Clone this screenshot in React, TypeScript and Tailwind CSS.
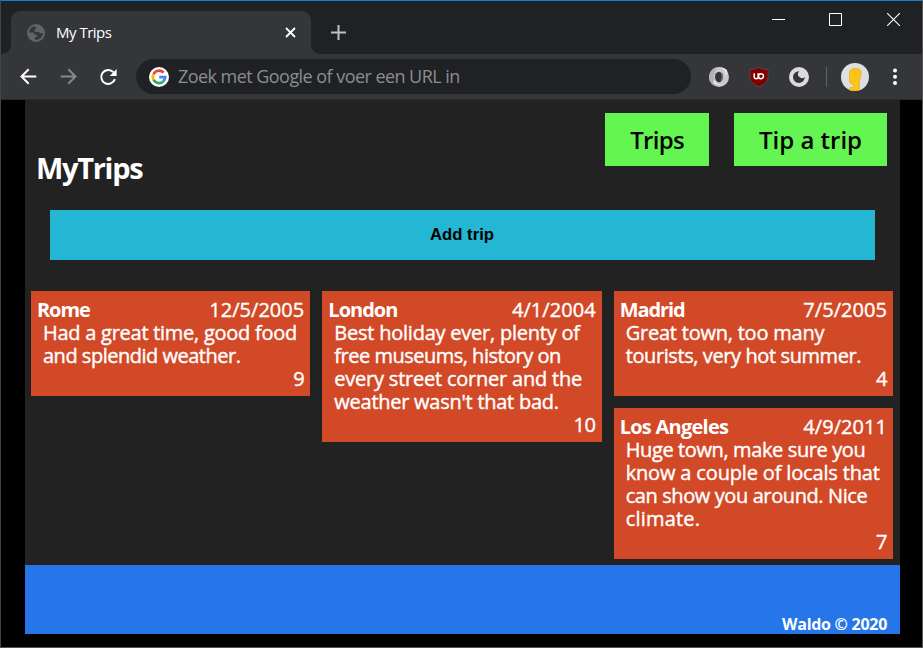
import type { ReactNode } from "react";

type Line = { text: string; track: string };
type Trip = {
  town: Line;
  date: string;
  lines: Line[];
  rating: string;
};

const rome: Trip = {
  town: { text: "Rome", track: "tracking-[-1.1px]" },
  date: "12/5/2005",
  lines: [
    { text: "Had a great time, good food", track: "tracking-[-0.26px]" },
    { text: "and splendid weather.", track: "tracking-[-0.49px]" },
  ],
  rating: "9",
};

const london: Trip = {
  town: { text: "London", track: "tracking-[-1px]" },
  date: "4/1/2004",
  lines: [
    { text: "Best holiday ever, plenty of", track: "tracking-[-0.23px]" },
    { text: "free museums, history on", track: "tracking-[-0.5px]" },
    { text: "every street corner and the", track: "tracking-[-0.22px]" },
    { text: "weather wasn't that bad.", track: "tracking-[-0.26px]" },
  ],
  rating: "10",
};

const madrid: Trip = {
  town: { text: "Madrid", track: "tracking-[-1.1px]" },
  date: "7/5/2005",
  lines: [
    { text: "Great town, too many", track: "tracking-[-0.22px]" },
    { text: "tourists, very hot summer.", track: "tracking-[-0.4px]" },
  ],
  rating: "4",
};

const losAngeles: Trip = {
  town: { text: "Los Angeles", track: "tracking-[-0.75px]" },
  date: "4/9/2011",
  lines: [
    { text: "Huge town, make sure you", track: "tracking-[-0.38px]" },
    { text: "know a couple of locals that", track: "tracking-[-0.16px]" },
    { text: "can show you around. Nice", track: "tracking-[-0.4px]" },
    { text: "climate.", track: "tracking-[0.2px]" },
  ],
  rating: "7",
};

function TripCard({ trip }: { trip: Trip }) {
  return (
    <article className="bg-[#d24927] px-1.5 pt-[7px] pb-1.5 text-[20px] leading-[23px] whitespace-nowrap text-white">
      <div className="flex justify-between">
        <h2 className={`font-bold ${trip.town.track}`}>{trip.town.text}</h2>
        <span className="tracking-[0.05px] [-webkit-text-stroke:0.4px_white]">{trip.date}</span>
      </div>
      <div className="pl-1.5 [-webkit-text-stroke:0.4px_white]">
        {trip.lines.map((line) => (
          <p key={line.text} className={line.track}>
            {line.text}
          </p>
        ))}
      </div>
      <p className="text-right tracking-[-0.4px] [-webkit-text-stroke:0.4px_white]">{trip.rating}</p>
    </article>
  );
}

function Column({ children }: { children: ReactNode }) {
  return <div className="flex flex-1 flex-col gap-3">{children}</div>;
}

function GlobeIcon() {
  return (
    <svg className="ml-4 size-[18px] shrink-0" viewBox="0 0 18 18">
      <circle cx="9" cy="9" r="9" fill="#606367" />
      <path
        d="M8 2.1C4.8 2.5 2.2 5.3 2.1 8.5h3.6c1 0 1.5.6 1.5 1.4v.9h1.7c.8 0 1.3.5 1.3 1.2v1H8v2.8c4.3.4 7.7-2.7 7.9-6.6h-2.1c-.9 0-1.3-.5-1.3-1.3H9.2c-1 0-1.7-.6-1.7-1.5 0-1 .7-1.6 1.7-1.6h.5V3.6H8z"
        fill="#35363a"
      />
    </svg>
  );
}

function TabStrip() {
  return (
    <div className="flex h-[53px] items-stretch bg-[#202124]">
      <div className="flex w-[10px] items-end bg-[#35363a]">
        <div className="h-full w-full rounded-br-[9px] bg-[#202124]" />
      </div>
      <div className="mt-[10px] flex w-[300px] items-center rounded-t-[9px] bg-[#35363a]">
        <GlobeIcon />
        <span className="mb-0.5 ml-[11px] text-[15px] leading-5 tracking-[-0.5px] text-white">My Trips</span>
        <svg className="mr-[15px] ml-auto size-[11px]" viewBox="0 0 11 11" stroke="#fff" strokeWidth="1.8">
          <path d="M1 1l9 9M10 1l-9 9" />
        </svg>
      </div>
      <div className="w-[10px] bg-[#35363a]">
        <div className="h-full w-full rounded-bl-[9px] bg-[#202124]" />
      </div>
      <svg className="mt-6 ml-[10px] size-[15px]" viewBox="0 0 15 15" stroke="#bdc1c6" strokeWidth="2">
        <path d="M7.5 0v15M0 7.5h15" />
      </svg>
      <div className="mt-3 mr-[22px] ml-auto flex gap-[43px]">
        <svg className="h-[13px] w-[14px]" viewBox="0 0 14 13" stroke="#fff">
          <path d="M0 6.5h13" />
        </svg>
        <svg className="size-[13px]" viewBox="0 0 13 13" fill="none" stroke="#fff">
          <path d="M.5.5h12v12H.5z" />
        </svg>
        <svg className="ml-[2px] size-[13px]" viewBox="0 0 13 13" stroke="#fff" strokeWidth="1.1">
          <path d="M0 0l13 13M13 0L0 13" />
        </svg>
      </div>
    </div>
  );
}

function GoogleIcon() {
  return (
    <svg className="ml-[13px] size-5 shrink-0" viewBox="0 0 20 20">
      <circle cx="10" cy="10" r="10" fill="#fff" />
      <g fill="none" strokeWidth="2.7">
        <path d="M14.6 5.6A6.2 6.2 0 0 0 4.6 7.1" stroke="#ea4335" />
        <path d="M4.6 7A6.2 6.2 0 0 0 4.6 13" stroke="#fbbc05" />
        <path d="M4.6 12.9A6.2 6.2 0 0 0 14 14.7" stroke="#34a853" />
        <path d="M13.9 14.8A6.2 6.2 0 0 0 16.2 10.1H10.2" stroke="#4285f4" />
      </g>
    </svg>
  );
}

function Toolbar() {
  return (
    <div className="flex h-[46px] items-center border-b border-[#2b2c2e] bg-[#35363a]">
      <svg className="ml-[19px] size-[17px]" viewBox="0 0 17 17" fill="none" stroke="#fff" strokeWidth="2">
        <path d="M16.3 8.5H2M8.7 1.3L1.5 8.5l7.2 7.2" />
      </svg>
      <svg className="ml-[23px] size-[17px]" viewBox="0 0 17 17" fill="none" stroke="#87888b" strokeWidth="2">
        <path d="M.7 8.5H15M8.3 1.3l7.2 7.2-7.2 7.2" />
      </svg>
      <svg className="ml-[22px] size-[18px]" viewBox="0 0 18 18">
        <path d="M14.4 4.1A7 7 0 1 0 15.9 11.2" fill="none" stroke="#fff" strokeWidth="2" />
        <path d="M17.6 1v7h-7z" fill="#fff" />
      </svg>
      <div className="ml-[19px] flex h-[35px] w-[555px] items-center rounded-full bg-[#202124]">
        <GoogleIcon />
        <span className="mb-px ml-[9px] text-[18px] leading-6 tracking-[-0.55px] whitespace-nowrap text-[#8b8d91]">
          Zoek met Google of voer een URL in
        </span>
      </div>
      <svg className="ml-[18px] size-5" viewBox="0 0 20 20">
        <circle cx="10" cy="10" r="10" fill="#c9c9c9" />
        <path d="M10 0a10 10 0 0 0-7 17c3 3 7 2 9-1-5 1-8-3-7-8 .5-4 2-7 5-8z" fill="#b2b2b2" />
        <path d="M9 1c5-.5 8 3 7.500 8 2-2 2-4 1.500-6A10 10 0 0 0 9 1z" fill="#e6e6e6" />
        <path d="M4 15c2 3.500 7 4 10.500 2-4 .5-7-.5-9-4z" fill="#e6e6e6" />
        <ellipse cx="10" cy="10" rx="4" ry="5.200" fill="#35363a" />
        <path d="M10 5c3 1 3.500 6 1 9.500 4-1 4-8-1-9.500z" fill="#77787a" />
      </svg>
      <svg className="ml-[20px] size-5" viewBox="0 0 20 20">
        <path d="M10 .3c2.700 1.700 5.500 2.200 9 2.300v6.900c0 5-3.500 7.800-9 10.300-5.500-2.500-9-5.300-9-10.300V2.600C4.500 2.500 7.300 2 10 .3z" fill="#800000" stroke="#65565a" strokeWidth=".6" />
        <path d="M5.200 6.300v3.500c0 1.300.7 2 2 2s2-.7 2-2V6.300" fill="none" stroke="#fff" strokeWidth="1.500" />
        <circle cx="12" cy="9.200" r="2.500" fill="none" stroke="#fff" strokeWidth="1.500" />
      </svg>
      <svg className="ml-[20px] size-5" viewBox="0 0 20 20">
        <circle cx="10" cy="10" r="10" fill="#dcdcdc" />
        <path d="M10.300 4.200A5.900 5.900 0 1 0 15.800 10a3.700 3.700 0 1 1-5.500-5.800z" fill="#35363a" />
      </svg>
      <div className="ml-[17px] h-5 w-px bg-[#606164]" />
      <svg className="ml-[14px] size-7" viewBox="0 0 28 28">
        <circle cx="14" cy="14" r="14" fill="#dedfe0" />
        <path d="M9 8.500C9.500 6 12 5.500 14.500 5.500c3.700 0 5.500 1.300 5.500 4.500 0 3.500-1 5.500-1.700 8.500v8.300c-2.500 1.200-6.500 1.300-10 .2l1-2.500h3.200l.3-3c-2.500 0-3.800-1-4.200-3.500-.4-3-.2-6 .4-9.500z" fill="#fcc419" stroke="#e9ac05" strokeWidth=".7" />
      </svg>
      <svg className="ml-[23px] h-[18px] w-[6px]" viewBox="0 0 6 18" fill="#fff">
        <circle cx="3" cy="2.500" r="2" />
        <circle cx="3" cy="8.800" r="2" />
        <circle cx="3" cy="15.100" r="2" />
      </svg>
    </div>
  );
}

export default function App() {
  return (
    <div className="flex h-[648px] w-[923px] flex-col overflow-hidden border border-t-[#1580d8] border-r-[#555] border-b-[#555] border-l-[#444] bg-black font-['Open_Sans','Noto_Sans',sans-serif]">
      <TabStrip />
      <Toolbar />
      <main className="mr-[22px] ml-6 flex h-[465px] flex-col bg-[#222]">
        <header className="flex h-[110px] items-start justify-between pt-[13px] pr-[13px] pl-[11px]">
          <h1 className="mt-[35px] text-[29px] leading-10 font-bold tracking-[-1.3px] text-white">MyTrips</h1>
          <nav className="flex gap-[25px] text-[24px] font-semibold whitespace-nowrap text-black">
            <a className="flex h-[53px] w-[104px] items-center justify-center bg-[#64f552] tracking-[-0.7px]">Trips</a>
            <a className="flex h-[53px] w-[153px] items-center justify-center bg-[#64f552] tracking-[0px]">Tip a trip</a>
          </nav>
        </header>
        <button className="mx-[25px] h-[50px] shrink-0 pr-px font-['Liberation_Sans',sans-serif] bg-[#24b7d3] text-[16.7px] font-bold text-black">
          Add trip
        </button>
        <section className="mt-[31px] flex items-start gap-3 pr-[7px] pl-1.5">
          <Column>
            <TripCard trip={rome} />
          </Column>
          <Column>
            <TripCard trip={london} />
          </Column>
          <Column>
            <TripCard trip={madrid} />
            <TripCard trip={losAngeles} />
          </Column>
        </section>
      </main>
      <footer className="mr-[22px] ml-6 flex h-[69px] items-end justify-end bg-[#2676e9] pr-[13px] text-[16px] leading-[19px] font-bold tracking-[-0.28px] text-white">
        Waldo © 2020
      </footer>
    </div>
  );
}
